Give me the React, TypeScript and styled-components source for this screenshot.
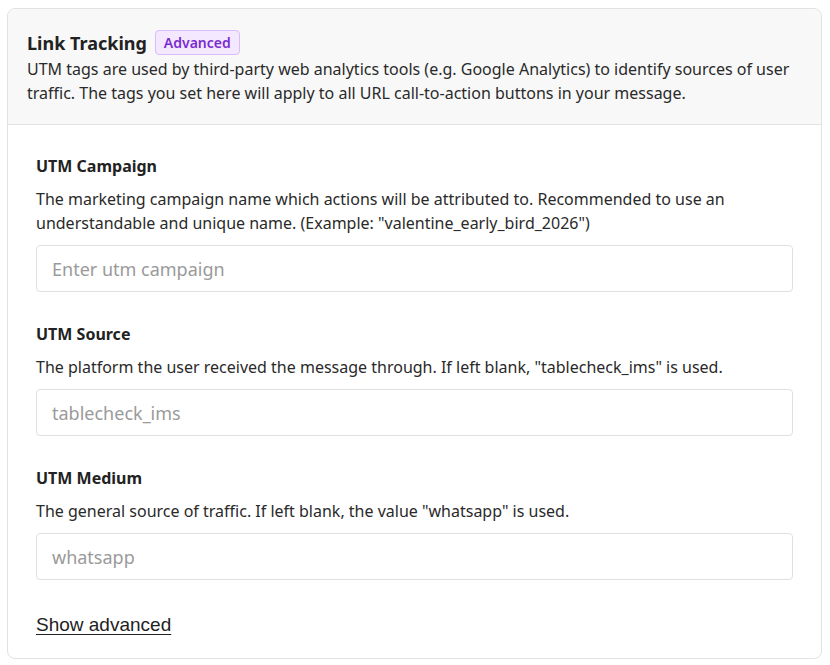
import React from "react";
import styled, { createGlobalStyle } from "styled-components";

const GlobalStyle = createGlobalStyle`
  body {
    margin: 0;
    background: #ffffff;
    font-family: "Noto Sans", "Open Sans", sans-serif;
    color: #222222;
  }
`;

const Page = styled.div`
  padding: 8px 8px 8px 7px;
`;

const Card = styled.section`
  border: 1px solid #e2e2e2;
  border-radius: 8px;
  overflow: hidden;
  background: #ffffff;
`;

const Header = styled.header`
  background: #f8f8f8;
  border-bottom: 1px solid #e2e2e2;
  padding: 21px 19px 19px 19px;
`;

const TitleRow = styled.div`
  display: flex;
  align-items: center;
  gap: 8px;
  margin-bottom: 2px;
`;

const Title = styled.h2`
  margin: 0;
  font-size: 18px;
  line-height: 24px;
  font-weight: 700;
  color: #222222;
`;

const Badge = styled.span`
  display: inline-flex;
  align-items: center;
  height: 23px;
  padding: 0 8px;
  border-radius: 4px;
  border: 1px solid #d9bdfb;
  background: #f3e8ff;
  color: #7a2cd0;
  font-size: 14px;
  font-weight: 600;
`;

const Intro = styled.p`
  margin: 0;
  font-size: 16px;
  line-height: 24px;
  color: #2a2a2a;
`;

const Body = styled.div`
  padding: 29px 28px 22px 28px;
  display: flex;
  flex-direction: column;
  gap: 30px;
`;

const Field = styled.div`
  display: flex;
  flex-direction: column;
`;

const Label = styled.label`
  font-size: 16px;
  line-height: 24px;
  font-weight: 700;
  color: #222222;
`;

const Hint = styled.p`
  margin: 9px 0 10px;
  font-size: 16px;
  line-height: 24px;
  color: #2a2a2a;
`;

const Input = styled.input`
  box-sizing: border-box;
  width: 100%;
  height: 47px;
  padding: 0 15px;
  border: 1px solid #e0e0e0;
  border-radius: 4px;
  font-family: inherit;
  font-size: 18px;
  color: #222222;
  outline: none;
  &::placeholder {
    color: #9a9a9a;
  }
`;

const ToggleButton = styled.button`
  align-self: flex-start;
  margin-top: 4px;
  background: none;
  border: none;
  padding: 0;
  font-family: "Liberation Sans", Arial, sans-serif;
  font-size: 19px;
  color: #222222;
  text-decoration: underline;
  text-underline-offset: 3px;
  cursor: pointer;
`;

const fields = [
  {
    label: "UTM Campaign",
    hint: 'The marketing campaign name which actions will be attributed to. Recommended to use an understandable and unique name. (Example: "valentine_early_bird_2026")',
    placeholder: "Enter utm campaign",
  },
  {
    label: "UTM Source",
    hint: 'The platform the user received the message through. If left blank, "tablecheck_ims" is used.',
    placeholder: "tablecheck_ims",
  },
  {
    label: "UTM Medium",
    hint: 'The general source of traffic. If left blank, the value "whatsapp" is used.',
    placeholder: "whatsapp",
  },
];

const App: React.FC = () => {
  return (
    <>
      <GlobalStyle />
      <Page>
        <Card>
          <Header>
            <TitleRow>
              <Title>Link Tracking</Title>
              <Badge>Advanced</Badge>
            </TitleRow>
            <Intro>
              UTM tags are used by third-party web analytics tools (e.g. Google Analytics) to identify sources of user
              traffic. The tags you set here will apply to all URL call-to-action buttons in your message.
            </Intro>
          </Header>
          <Body>
            {fields.map((f) => (
              <Field key={f.label}>
                <Label>{f.label}</Label>
                <Hint>{f.hint}</Hint>
                <Input placeholder={f.placeholder} />
              </Field>
            ))}
            <ToggleButton type="button">Show advanced</ToggleButton>
          </Body>
        </Card>
      </Page>
    </>
  );
};

export default App;
